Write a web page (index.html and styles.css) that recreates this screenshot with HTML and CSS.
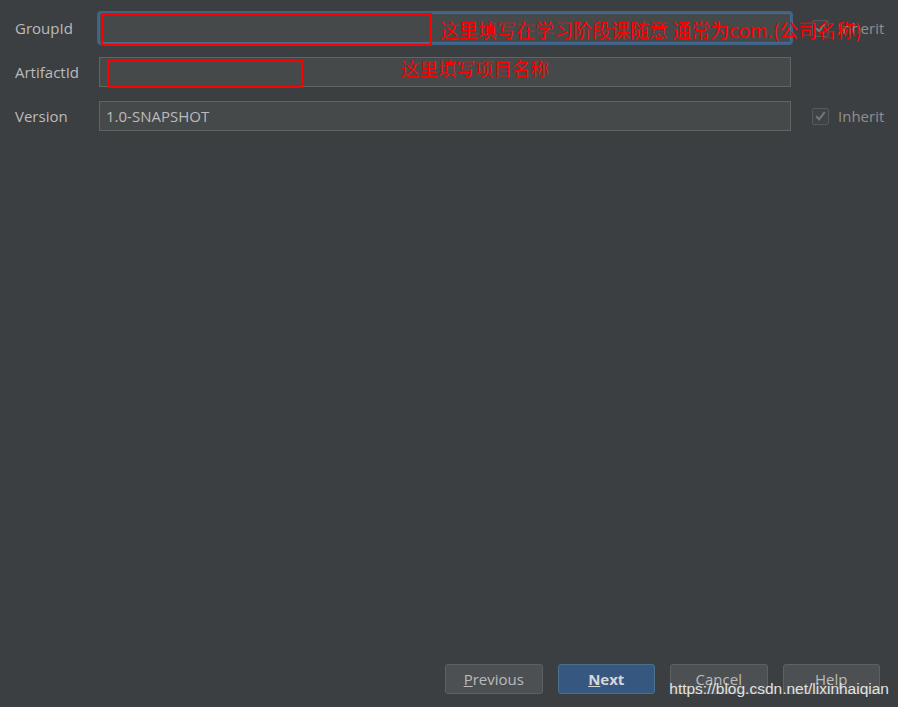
FILE: index.html
```html
<!DOCTYPE html>
<html lang="en">
<head>
  <meta charset="UTF-8">
  <title>New Project</title>
  <link rel="stylesheet" href="styles.css">
</head>
<body>
  <div class="wizard">
    <div class="form">
      <label class="label">GroupId</label>
      <div class="field focused"></div>
      <div class="inherit">
        <span class="check"><svg viewBox="0 0 16 16" width="16" height="16"><path d="M3.5 8.2l3 3.3L12.5 3.8" fill="none" stroke="#737678" stroke-width="2.2"/></svg></span>
        <span>Inherit</span>
      </div>

      <label class="label">ArtifactId</label>
      <div class="field"></div>
      <div></div>

      <label class="label">Version</label>
      <div class="field">1.0-SNAPSHOT</div>
      <div class="inherit">
        <span class="check"><svg viewBox="0 0 16 16" width="16" height="16"><path d="M3.5 8.2l3 3.3L12.5 3.8" fill="none" stroke="#737678" stroke-width="2.2"/></svg></span>
        <span>Inherit</span>
      </div>
    </div>

    <div class="footer">
      <button class="btn"><u>P</u>revious</button>
      <button class="btn primary"><u>N</u>ext</button>
      <button class="btn">Cancel</button>
      <button class="btn">Help</button>
    </div>
  </div>

  <!-- annotations drawn over the screenshot -->
  <div class="mark mark-group"></div>
  <div class="mark mark-artifact"></div>
  <div class="note note-group">这里填写在学习阶段课随意 通常为com.(公司名称)</div>
  <div class="note note-artifact">这里填写项目名称</div>
  <div class="watermark">https://blog.csdn.net/lixinhaiqian</div>
</body>
</html>
```

FILE: styles.css
```css
html, body {
  margin: 0;
  height: 100%;
}
body {
  background: #3c3f41;
  color: #bbbbbb;
  font-family: "Open Sans", "Noto Sans", sans-serif;
  font-size: 15px;
  position: relative;
  overflow: hidden;
}
.wizard {
  display: flex;
  flex-direction: column;
  justify-content: space-between;
  height: 100%;
  box-sizing: border-box;
  padding: 13px 0 13px 15px;
}
.form {
  display: grid;
  grid-template-columns: 84px 1fr 107px;
  grid-auto-rows: 30px;
  row-gap: 14px;
  align-items: center;
}
.label {
  color: #bbbbbb;
}
.field {
  height: 30px;
  box-sizing: border-box;
  background: #45494a;
  border: 1px solid #646464;
  padding: 0 6px;
  line-height: 28px;
  color: #bbbbbb;
}
.field.focused {
  border-color: #4a6b8f;
  box-shadow: 0 0 0 2px #3e6386;
  border-radius: 2px;
}
.inherit {
  display: flex;
  align-items: center;
  gap: 9px;
  padding-left: 21px;
  color: #8f8f8f;
}
.check {
  width: 17px;
  height: 17px;
  box-sizing: border-box;
  border: 1px solid #56595b;
  border-radius: 2px;
  background: #3f4345;
  display: flex;
  align-items: center;
  justify-content: center;
}
.check svg {
  display: block;
}
.footer {
  display: flex;
  justify-content: flex-end;
  gap: 15px;
  padding-right: 18px;
}
.btn {
  width: 97.5px;
  height: 30px;
  background: #4c5052;
  border: 1px solid #5e6163;
  border-radius: 3px;
  color: #bbbbbb;
  font-family: "Open Sans", "Noto Sans", sans-serif;
  font-size: 15px;
  padding: 0;
}
.btn.primary {
  background: #365880;
  border-color: #4c708c;
  color: #d6d6d6;
  font-weight: bold;
}
.mark {
  position: absolute;
  border: 2px solid #ff0000;
  box-sizing: border-box;
}
.mark-group {
  left: 101px;
  top: 13px;
  width: 331px;
  height: 33px;
}
.mark-artifact {
  left: 107px;
  top: 60px;
  width: 196px;
  height: 28px;
}
.note {
  position: absolute;
  color: #ff0000;
  font-family: "Microsoft YaHei", "Noto Sans CJK SC", sans-serif;
  font-size: 18.5px;
  line-height: 24px;
  white-space: nowrap;
}
.note-group {
  left: 440px;
  top: 18px;
  font-size: 19px;
}
.note-artifact {
  left: 401px;
  top: 56px;
}
.watermark {
  position: absolute;
  right: 9px;
  bottom: 9px;
  color: #e2e2e2;
  font-family: "Liberation Sans", Arial, sans-serif;
  font-size: 15.5px;
  line-height: 18px;
}
```
